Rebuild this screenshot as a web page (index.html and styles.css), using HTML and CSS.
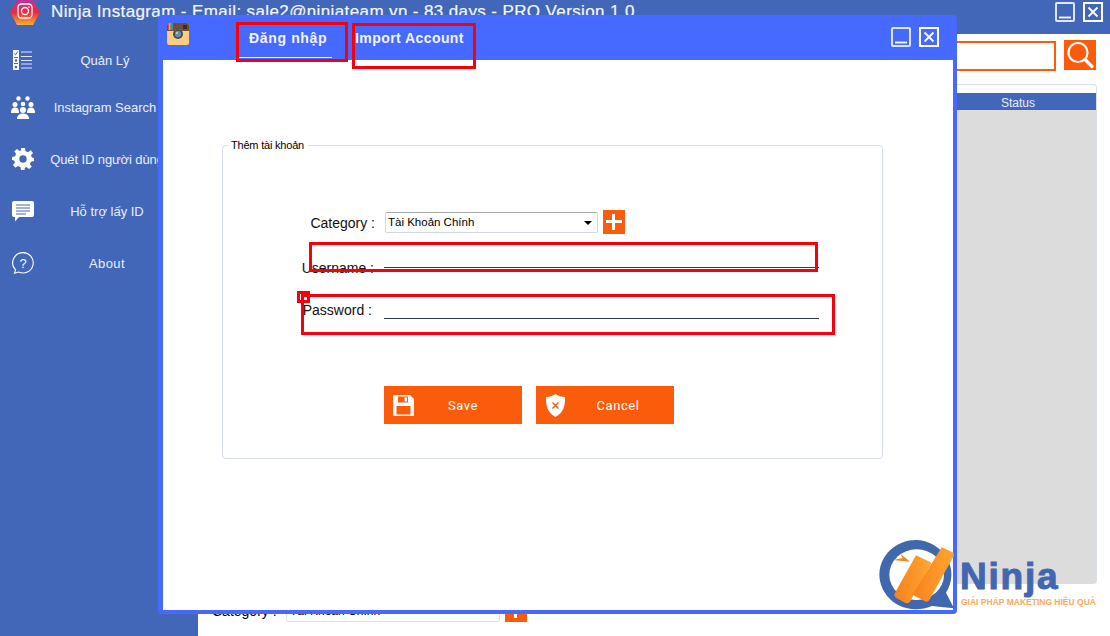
FILE: index.html
```html
<!DOCTYPE html>
<html lang="vi">
<head>
<meta charset="utf-8">
<title>Ninja Instagram</title>
<link rel="stylesheet" href="styles.css">
</head>
<body>
<div class="app">
  <header class="titlebar">
    <svg class="app-logo" viewBox="0 0 30 25" width="30" height="25">
      <defs><linearGradient id="ig" x1="0" y1="0" x2="0" y2="1"><stop offset="0" stop-color="#b8349c"/><stop offset=".5" stop-color="#ee2a3c"/><stop offset="1" stop-color="#fbb02e"/></linearGradient></defs>
      <path d="M7 0H23L30 12L23 25H7L0 12Z" fill="url(#ig)"/>
      <rect x="8" y="4" width="14" height="14" rx="3.500" fill="none" stroke="#fff" stroke-width="1.300"/>
      <circle cx="15" cy="11" r="3.500" fill="none" stroke="#fff" stroke-width="1.300"/>
      <circle cx="19" cy="7" r=".8" fill="#fff"/>
    </svg>
    <h1 class="app-title">Ninja Instagram - Email: sale2@ninjateam.vn - 83 days - PRO Version 1.0</h1>
    <div class="win-btns">
      <span class="win-btn"><svg viewBox="0 0 20 20" width="20" height="20"><rect x="1" y="1" width="18" height="18" rx="1" fill="none" stroke="#dfe6f7" stroke-width="2"/><path d="M4 15.500H16" stroke="#fff" stroke-width="1.800"/></svg></span>
      <span class="win-btn"><svg viewBox="0 0 20 20" width="20" height="20"><rect x="1" y="1" width="18" height="18" fill="none" stroke="#fff" stroke-width="2"/><path d="M5.500 5.500L14.500 14.500M14.500 5.500L5.500 14.500" stroke="#fff" stroke-width="1.800"/></svg></span>
    </div>
  </header>

  <div class="main">
    <nav class="sidebar">
      <a class="nav-item nav-first"><span class="nav-icon">
        <svg viewBox="0 0 20 20" width="20" height="20"><rect x="0" y="0" width="6" height="20" fill="#fff"/><path d="M1.200 3.500L2.500 4.800L4.800 1.500M1 7.500H5M1 13.500H5" stroke="#4267b9" fill="none"/><circle cx="3" cy="10.500" r="1.200" fill="#4267b9"/><circle cx="3" cy="17" r="1.300" fill="#4267b9"/><path d="M8 2H19M8 6.500H19M8 10.500H19M8 14H19M8 18H19" stroke="#dfe6f7" stroke-width="1.200"/></svg>
      </span><span class="nav-label label-shift">Quản Lý</span></a>
      <a class="nav-item"><span class="nav-icon">
        <svg viewBox="0 0 24 23" width="24" height="23" fill="#fff"><circle cx="7.500" cy="2.500" r="2.200"/><circle cx="16.500" cy="2.500" r="2.200"/><circle cx="4" cy="8.500" r="2.500"/><circle cx="20" cy="8.500" r="2.500"/><circle cx="12" cy="8" r="2.300"/><path d="M0 17C0 12.500 2 11.500 4 11.500C6 11.500 8 12.500 8 17Z"/><path d="M16 17C16 12.500 18 11.500 20 11.500C22 11.500 24 12.500 24 17Z"/><circle cx="12" cy="14" r="3"/><path d="M6 23C6 19 9 17.500 12 17.500C15 17.500 18 19 18 23Z"/></svg>
      </span><span class="nav-label label-shift">Instagram Search</span></a>
      <a class="nav-item"><span class="nav-icon">
        <svg viewBox="0 0 22 22" width="22" height="22"><path fill="#fff" fill-rule="evenodd" d="M9 0H13L13.600 3.200L16 4.200L18.700 2.300L21 5L19 7.500L19.900 9.600L22 9.900V13L18.900 13.700L17.900 16L19.700 18.800L17 21L14.500 19L12.800 19.800L12.500 22H9L8.400 18.900L6 17.900L3.300 19.700L1 17L3 14.500L2.100 12.400L0 12.100V9L3.100 8.300L4.100 6L2.300 3.300L5 1L7.500 3L9.200 2.200ZM11 7.300A3.700 3.700 0 1 0 11 14.700A3.700 3.700 0 1 0 11 7.300Z"/></svg>
      </span><span class="nav-label label-tight">Quét ID người dùng</span></a>
      <a class="nav-item"><span class="nav-icon">
        <svg viewBox="0 0 22 21" width="22" height="21"><path fill="#fff" d="M2 0H20A2 2 0 0 1 22 2V14A2 2 0 0 1 20 16H7L3 20.500V16H2A2 2 0 0 1 0 14V2A2 2 0 0 1 2 0Z"/><path d="M4 4H18M4 7H18M4 10H18M4 13H14" stroke="#4267b9"/></svg>
      </span><span class="nav-label">Hỗ trợ lấy ID</span></a>
      <a class="nav-item"><span class="nav-icon">
        <svg viewBox="0 0 22 22" width="22" height="22"><path fill="none" stroke="#fff" stroke-width="1.100" d="M11 .6A10.200 10.200 0 1 1 6.600 20L2.500 21.200L3.600 17.900A10.200 10.200 0 0 1 11 .6Z"/><text x="11" y="15.500" class="help-mark">?</text></svg>
      </span><span class="nav-label label-wide">About</span></a>
    </nav>

    <section class="content">
      <div class="toolbar">
        <input class="search-input" type="text" aria-label="Search">
        <button class="search-btn" aria-label="Search"><svg viewBox="0 0 32 30" width="32" height="30"><circle cx="14" cy="12.500" r="9.500" fill="none" stroke="#fff" stroke-width="2.200"/><path d="M21 19.500L28 26.500" stroke="#fff" stroke-width="3.200" stroke-linecap="round"/></svg></button>
      </div>
      <div class="table-frame">
        <div class="table-head"><span></span><span class="status-col">Status</span></div>
        <div class="table-body"></div>
      </div>
      <div class="bottom-row">
        <span class="bottom-label">Category :</span>
        <div class="bottom-select">Tài Khoản Chính</div>
        <span class="plus-btn plus-small"></span>
      </div>
    </section>
  </div>

  <div class="modal">
    <div class="modal-head">
      <svg class="modal-icon" viewBox="0 0 22 22" width="22" height="22">
        <rect width="22" height="22" rx="2.500" fill="#ffcd7e"/>
        <path d="M2.500 0H19.500A2.500 2.500 0 0 1 22 2.500V8H15A5 5 0 0 0 7 8H0V2.500A2.500 2.500 0 0 1 2.500 0Z" fill="#6f4e37"/>
        <rect x="1" y="0" width="1.200" height="7" fill="#e84a3c"/><rect x="2.200" y="0" width="1.200" height="7" fill="#f6c343"/><rect x="3.400" y="0" width="1.200" height="7" fill="#5fb85a"/><rect x="4.600" y="0" width="1.200" height="7" fill="#3f8fdc"/>
        <rect x="16" y="2" width="4" height="4" fill="#3e2a1c"/>
        <circle cx="11" cy="11" r="5" fill="#3d4a52"/><circle cx="11" cy="11" r="3.200" fill="#5f8fa5"/><circle cx="10" cy="10" r="1" fill="#c6dbe4"/>
      </svg>
      <div class="tabs">
        <a class="tab tab-active">Đăng nhập</a>
        <a class="tab">Import Account</a>
      </div>
      <div class="win-btns modal-btns">
        <span class="win-btn"><svg viewBox="0 0 20 20" width="20" height="20"><rect x="1" y="1" width="18" height="18" rx="1" fill="none" stroke="#dfe6f7" stroke-width="2"/><path d="M4 15.500H16" stroke="#fff" stroke-width="1.800"/></svg></span>
        <span class="win-btn"><svg viewBox="0 0 20 20" width="20" height="20"><rect x="1" y="1" width="18" height="18" fill="none" stroke="#fff" stroke-width="2"/><path d="M5.500 5.500L14.500 14.500M14.500 5.500L5.500 14.500" stroke="#fff" stroke-width="1.800"/></svg></span>
      </div>
    </div>
    <div class="modal-body">
      <fieldset class="account-box">
        <legend class="account-legend">Thêm tài khoản</legend>
        <div class="form-row row-category">
          <label class="form-label label-category">Category :</label>
          <div class="select-wrap">
            <select class="select"><option>Tài Khoản Chính</option></select>
          </div>
          <span class="plus-btn"></span>
        </div>
        <div class="form-row row-username">
          <label class="form-label">Username :</label>
          <input class="line-input input-username" type="text">
        </div>
        <div class="form-row row-password">
          <label class="form-label label-password">Password :</label>
          <input class="line-input input-password" type="password">
        </div>
        <div class="actions">
          <button class="action-btn">
            <svg viewBox="0 0 21 21" width="21" height="21"><path fill="#fff" fill-rule="evenodd" d="M1 0H17L21 4V20A1 1 0 0 1 20 21H1A1 1 0 0 1 0 20V1A1 1 0 0 1 1 0ZM5 1.500V7.500H15V1.500ZM11.500 2.500H14V6.500H11.500ZM3.500 11V19.500H17.500V11Z"/></svg>
            <span>Save</span>
          </button>
          <button class="action-btn action-cancel">
            <svg viewBox="0 0 21 23" width="21" height="23"><path fill="#fff" d="M10.500 0C13 2 16.500 3 20 3C20.500 12 18 19 10.500 23C3 19 .5 12 1 3C4.500 3 8 2 10.500 0Z"/><path d="M7.500 8.500L13.500 14.500M13.500 8.500L7.500 14.500" stroke="#fa5c0c" stroke-width="1.500"/></svg>
            <span>Cancel</span>
          </button>
        </div>
      </fieldset>
    </div>
  </div>

  <span class="mark mark-tab1"></span>
  <span class="mark mark-tab2"></span>
  <span class="mark mark-user"></span>
  <span class="mark mark-pass"></span>
  <span class="mark mark-dot"></span>

  <div class="brand">
    <svg class="brand-mark" viewBox="0 0 300 300" width="100" height="100">
      <defs><linearGradient id="org" x1="0" y1="0" x2="1" y2="0"><stop offset="0" stop-color="#f9801c"/><stop offset="1" stop-color="#ffa733"/></linearGradient></defs>
      <path d="M172 30A110 104 0 1 0 215 228L282 235L258 188A110 104 0 0 0 172 30Z" fill="#3f68ae"/>
      <ellipse cx="170" cy="134" rx="82" ry="76" fill="#fff"/>
      <path d="M168 76L215 98L150 215Q145 222 135 218L108 203Q100 198 105 188Z" fill="url(#org)"/>
      <path d="M245 52L276 66Q284 70 280 80L208 210Q203 218 193 213L165 198Q158 194 162 186Z" fill="url(#org)"/>
      <path d="M98 90L150 95L120 70L128 84Z" fill="#f28a1e"/>
    </svg>
    <div class="brand-text">
      <div class="brand-name">Ninja</div>
      <div class="brand-sub">GIẢI PHÁP MAKETING HIỆU QUẢ</div>
    </div>
  </div>
</div>
</body>
</html>
```

FILE: styles.css
```css
* { box-sizing: border-box; }
html, body { margin: 0; padding: 0; }
body { font-family: "Liberation Sans", Arial, sans-serif; background: #fff; }

.app {
  position: relative;
  width: 1110px;
  height: 636px;
  overflow: hidden;
  display: flex;
  flex-direction: column;
}

/* Main window */
.titlebar {
  height: 34px;
  flex: none;
  background: #4267b9;
  display: flex;
  align-items: flex-start;
  padding-left: 10px;
  color: #fff;
}
.app-logo { display: block; flex: none; }
.app-title {
  margin: 2px 0 0 11px;
  font-size: 17px;
  font-weight: 400;
  line-height: 20px;
  color: #f4f6fd;
  white-space: nowrap;
  letter-spacing: .38px;
  -webkit-text-stroke: .2px #f4f6fd;
}
.win-btns { margin-left: auto; display: flex; gap: 8px; padding: 2px 7px 0 0; }
.win-btn { display: block; width: 20px; height: 20px; }
.win-btn svg { display: block; }

.main { flex: 1; display: flex; min-height: 0; }
.sidebar { width: 198px; flex: none; background: #4267b9; }
.nav-item {
  height: 52px;
  display: flex;
  align-items: center;
  color: #e9edf9;
  font-size: 13px;
}
.nav-first { height: 47px; padding-top: 5px; }
.nav-icon { width: 46px; flex: none; display: flex; justify-content: center; }
.nav-icon svg { display: block; }
.nav-label { width: 122px; text-align: center; white-space: nowrap; }
.label-shift { padding-right: 4px; }
.label-tight { letter-spacing: -.1px; }
.label-wide { letter-spacing: .4px; }
.help-mark { font-size: 13px; fill: #fff; text-anchor: middle; font-family: "Liberation Sans", Arial, sans-serif; }

.content { flex: 1; min-width: 0; display: flex; flex-direction: column; padding: 6px 13px 0 14px; background: #fff; }
.toolbar { display: flex; justify-content: flex-end; gap: 8px; height: 30px; padding-right: 1px; }
.search-input { width: 360px; height: 30px; margin-top: 1px; border: 2px solid #fa5c0c; background: #fff; padding: 0; }
.search-btn { width: 32px; height: 30px; padding: 0; border: 0; background: #fa5c0c; }
.search-btn svg { display: block; }
.table-frame {
  margin-top: 14px;
  height: 500px;
  padding-top: 8px;
  border: 1px solid #d8dfe8;
  border-radius: 4px;
  border-left: 0;
  display: flex;
  flex-direction: column;
}
.table-head {
  height: 17px;
  flex: none;
  display: grid;
  grid-template-columns: 1fr 156px;
  background: #4267b9;
  color: #e9edf9;
  font-size: 12px;
  line-height: 20px;
  text-align: center;
}
.table-body { flex: 1; background: #dcdcdc; }
.bottom-row { display: flex; align-items: flex-start; margin-top: 14px; }
.bottom-label { width: 74px; font-size: 14px; line-height: 26px; }
.bottom-select { width: 214px; height: 24px; border: 1px solid #dfe3e8; border-radius: 2px; font-size: 12px; line-height: 24px; padding-left: 3px; }

/* Dialog */
.modal {
  position: absolute;
  left: 158px;
  top: 15px;
  width: 799px;
  height: 599px;
  border-radius: 4px;
  background: #4669ff;
  display: flex;
  flex-direction: column;
  padding: 0 4px 4px 5px;
}
.modal-head { height: 45px; flex: none; display: flex; align-items: flex-start; }
.modal-icon { margin: 8px 0 0 4px; display: block; flex: none; }
.tabs { display: flex; margin-left: 50px; }
.tab {
  display: block;
  height: 44px;
  padding: 15px 10px 0;
  font-size: 14px;
  font-weight: 700;
  line-height: 16px;
  letter-spacing: .43px;
  color: #f2f4ff;
  white-space: nowrap;
}
.tab-active { position: relative; width: 93px; padding-left: 10px; margin-right: 23px; letter-spacing: .65px; }
.tab-active::after { content: ""; position: absolute; left: 0; right: 0; bottom: 1px; height: 1px; background: #fff; }
.tabs .tab:last-child { padding-left: 0; }
.modal-btns { padding: 12px 14px 0 0; }

.modal-body { flex: 1; background: #fff; padding: 78px 70px 0 59px; }
.account-box {
  margin: 0;
  height: 321px;
  padding: 58px 0 0;
  border: 1px solid #d5dde6;
  border-radius: 4px;
  min-width: 0;
}
.account-legend {
  margin-left: 5px;
  padding: 0 4px 0 3px;
  font-size: 11px;
  line-height: 14px;
  letter-spacing: -.2px;
  color: #000;
}
.form-row { display: flex; align-items: flex-start; }
.form-label { width: 151px; flex: none; text-align: right; font-size: 14px; line-height: 24px; color: #111; white-space: nowrap; }
.label-category { width: 152px; padding-top: 1px; }
.row-category { height: 24px; gap: 9px; }
.row-username { height: 24px; margin-top: 22px; gap: 10px; }
.row-password { height: 24px; margin-top: 18px; gap: 10px; }
.label-password { padding-right: 2px; }
.select-wrap { position: relative; width: 213px; height: 21px; margin: 2px 0 0 1px; }
.select-wrap::after {
  content: "";
  position: absolute;
  right: 6px;
  top: 9px;
  border: 4px solid transparent;
  border-top-color: #000;
  border-bottom: 0;
}
.select {
  appearance: none;
  display: block;
  width: 100%;
  height: 100%;
  border: 1px solid #d5d8e0;
  border-top-color: #aaa;
  border-radius: 2px;
  background: #fff;
  padding: 0 0 0 2px;
  font: 11.5px/19px "Liberation Sans", Arial, sans-serif;
  color: #000;
}
.plus-btn {
  position: relative;
  display: block;
  width: 22px;
  height: 24px;
  margin-left: -4px;
  background: #fa5c0c;
  flex: none;
}
.plus-btn::before, .plus-btn::after { content: ""; position: absolute; background: #fff; }
.plus-btn::before { left: 3px; right: 3px; top: 10px; height: 3px; }
.plus-btn::after { top: 4px; bottom: 4px; left: 9px; width: 3px; }
.plus-small { margin-left: 5px; }
.line-input { width: 435px; border: 0; border-bottom: 1px solid #2e3a45; padding: 0; outline: 0; background: transparent; border-radius: 0; }
.input-username { height: 12px; }
.input-password { height: 21px; }
.actions { display: flex; gap: 14px; margin: 64px 0 0 161px; }
.action-btn {
  display: flex;
  align-items: center;
  width: 138px;
  height: 38px;
  padding: 0 0 0 9px;
  border: 0;
  background: #fa5c0c;
  color: #fff;
  font: 13px Roboto, "Liberation Sans", sans-serif;
  letter-spacing: .6px;
}
.action-btn svg { display: block; flex: none; }
.action-btn span { flex: 1; text-align: center; padding-right: 10px; }
.action-cancel span { padding-right: 4px; }

/* Red annotations drawn over the screenshot */
.mark { position: absolute; border: 3px solid #f5000c; }
.mark-tab1 { left: 236px; top: 22px; width: 112px; height: 40px; }
.mark-tab2 { left: 352px; top: 23px; width: 124px; height: 46px; }
.mark-user { left: 309px; top: 242px; width: 509px; height: 30px; }
.mark-pass { left: 301px; top: 294px; width: 534px; height: 41px; }
.mark-dot { left: 297px; top: 291px; width: 13px; height: 12px; }

/* Watermark */
.brand { position: absolute; left: 860px; top: 530px; display: flex; align-items: flex-start; }
.brand-mark { display: block; flex: none; }
.brand-text { margin: 28px 0 0; }
.brand-name {
  font-size: 37px;
  font-weight: 700;
  line-height: 38px;
  color: #4267b0;
  letter-spacing: 1.800px;
  -webkit-text-stroke: 1px #4267b0;
}
.brand-sub { font-size: 8.500px; font-weight: 700; line-height: 12px; color: #f7ab5e; margin-top: 0; padding-left: 1px; white-space: nowrap; }
```
